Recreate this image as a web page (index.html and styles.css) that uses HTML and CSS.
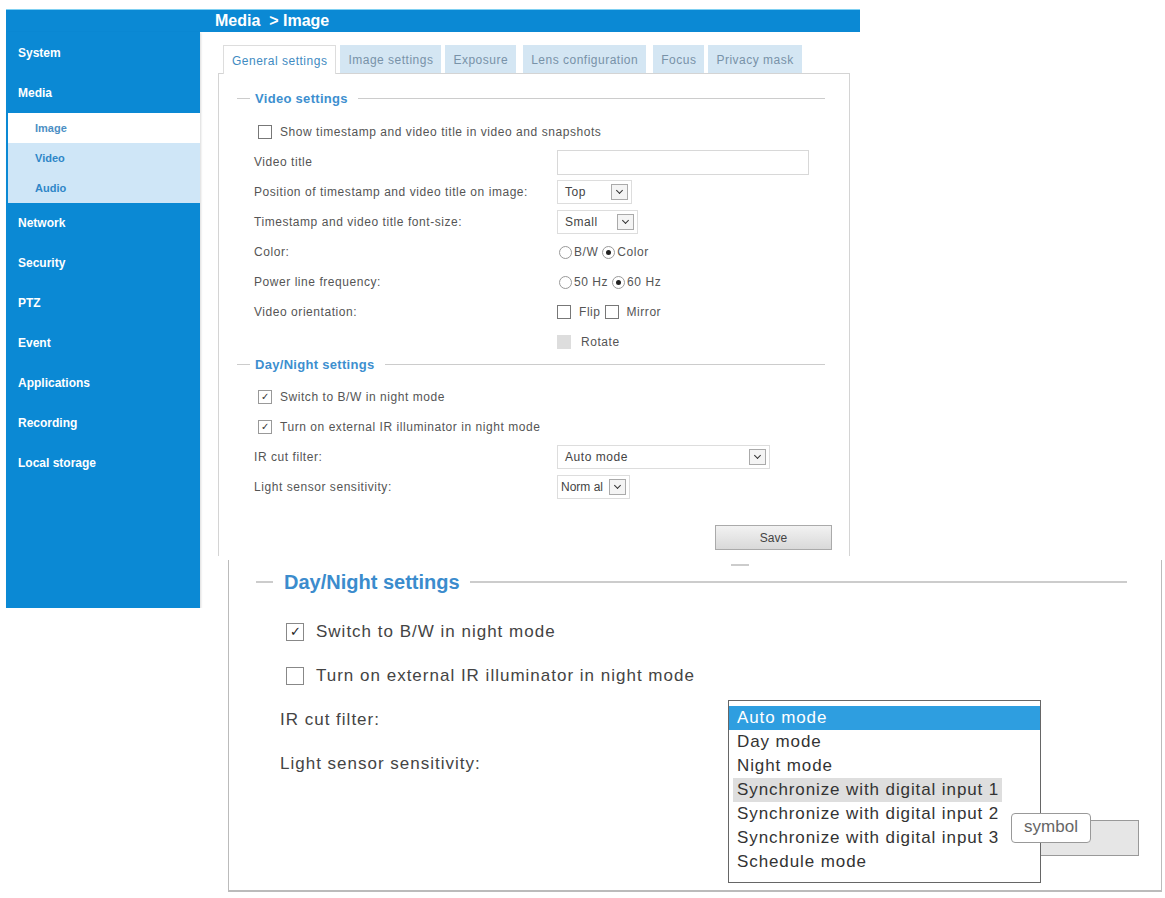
FILE: index.html
```html
<!DOCTYPE html>
<html lang="en">
<head>
    <meta charset="UTF-8">
    <meta name="viewport" content="width=device-width, initial-scale=1.0">
    <title>Media &gt; Image</title>
    <link rel="stylesheet" href="styles.css">
</head>
<body>
    <div class="console">
        <div class="topbar"><span class="crumb">Media &nbsp;&gt; Image</span></div>
        <div class="frame">
            <nav class="sidebar">
                <a class="nav_item">System</a>
                <a class="nav_item">Media</a>
                <div class="submenu">
                    <a class="sub_item current">Image</a>
                    <a class="sub_item">Video</a>
                    <a class="sub_item">Audio</a>
                </div>
                <a class="nav_item">Network</a>
                <a class="nav_item">Security</a>
                <a class="nav_item">PTZ</a>
                <a class="nav_item">Event</a>
                <a class="nav_item">Applications</a>
                <a class="nav_item">Recording</a>
                <a class="nav_item">Local storage</a>
            </nav>

            <div class="main">
                <ul class="tabs">
                    <li class="tab active">General settings</li>
                    <li class="tab">Image settings</li>
                    <li class="tab">Exposure</li>
                    <li class="tab tab_wide">Lens configuration</li>
                    <li class="tab tab_wide">Focus</li>
                    <li class="tab">Privacy mask</li>
                </ul>

                <div class="panel">
                    <div class="legend"><span class="dash"></span><span class="legend_title">Video settings</span><span class="rule"></span></div>

                    <div class="row check_row first">
                        <span class="box"></span>Show timestamp and video title in video and snapshots
                    </div>
                    <div class="row">
                        <span class="label">Video title</span>
                        <span class="textbox"></span>
                    </div>
                    <div class="row">
                        <span class="label">Position of timestamp and video title on image:</span>
                        <span class="select sel_top">Top<span class="arrow"></span></span>
                    </div>
                    <div class="row">
                        <span class="label">Timestamp and video title font-size:</span>
                        <span class="select sel_small">Small<span class="arrow"></span></span>
                    </div>
                    <div class="row">
                        <span class="label">Color:</span>
                        <span class="radio"></span>B/W <span class="radio on"></span>Color
                    </div>
                    <div class="row">
                        <span class="label">Power line frequency:</span>
                        <span class="radio"></span>50 Hz <span class="radio on"></span>60 Hz
                    </div>
                    <div class="row">
                        <span class="label">Video orientation:</span>
                        <span class="box"></span>Flip <span class="box gap"></span>Mirror
                    </div>
                    <div class="row">
                        <span class="label"></span>
                        <span class="box disabled"></span>Rotate
                    </div>

                    <div class="legend second"><span class="dash"></span><span class="legend_title">Day/Night settings</span><span class="rule"></span></div>

                    <div class="row check_row after_legend">
                        <span class="box checked">&#10003;</span>Switch to B/W in night mode
                    </div>
                    <div class="row check_row">
                        <span class="box checked">&#10003;</span>Turn on external IR illuminator in night mode
                    </div>
                    <div class="row">
                        <span class="label">IR cut filter:</span>
                        <span class="select sel_mode">Auto mode<span class="arrow"></span></span>
                    </div>
                    <div class="row">
                        <span class="label">Light sensor sensitivity:</span>
                        <span class="select sel_normal">Norm al<span class="arrow"></span></span>
                    </div>

                    <div class="actions"><button class="save">Save</button></div>
                </div>
            </div>
        </div>
    </div>

    <!-- enlarged view of the Day/Night block with the IR cut filter list open -->
    <div class="closeup">
        <span class="grip"></span>
        <div class="big_legend"><span class="dash"></span><span class="big_title">Day/Night settings</span><span class="rule"></span></div>

        <div class="big_row">
            <span class="big_box">&#10003;</span>Switch to B/W in night mode
        </div>
        <div class="big_row">
            <span class="big_box"></span>Turn on external IR illuminator in night mode
        </div>
        <div class="big_row label_row">IR cut filter:</div>
        <div class="big_row label_row">Light sensor sensitivity:</div>

        <span class="hidden_button"></span>
        <ul class="options">
            <li class="opt selected">Auto mode</li>
            <li class="opt">Day mode</li>
            <li class="opt">Night mode</li>
            <li class="opt hover">Synchronize with digital input 1</li>
            <li class="opt">Synchronize with digital input 2</li>
            <li class="opt">Synchronize with digital input 3</li>
            <li class="opt">Schedule mode</li>
        </ul>
        <span class="tooltip">symbol</span>
    </div>
</body>
</html>
```

FILE: styles.css
```css
body {
    font-family: "Liberation Sans", Arial, sans-serif;
    margin: 0;
    padding: 0;
    background: #fff;
    color: #555;
}

.console {
    width: 854px;
    margin: 10px 0 0 6px;
}
.topbar {
    height: 22px;
    background: #0b89d4;
    border-top: 1px solid #7fd0f2;
    margin-top: -1px;
}
.crumb {
    display: inline-block;
    margin-left: 209px;
    color: #fff;
    font-weight: bold;
    font-size: 16px;
    line-height: 22px;
}
.frame {
    display: flex;
}

/* left menu */
.sidebar {
    flex-shrink: 0;
    width: 194px;
    height: 576px;
    background: #0b89d4;
    display: flex;
    flex-direction: column;
    box-shadow: 1px 1px 2px rgba(0, 0, 0, 0.15);
}
.nav_item {
    display: block;
    height: 40px;
    line-height: 40px;
    padding-left: 12px;
    color: #fff;
    font-weight: bold;
    font-size: 12px;
}
.nav_item:first-child {
    margin-top: 1px;
}
.submenu {
    margin-left: 2px;
    background: #cfe6f7;
}
.sub_item {
    display: block;
    height: 30px;
    line-height: 30px;
    padding-left: 27px;
    color: #2f86c8;
    font-weight: bold;
    font-size: 11px;
}
.sub_item.current {
    background: #fff;
    color: #4c8fc4;
}

/* settings area */
.main {
    width: 642px;
    padding: 13px 0 0 18px;
}
.tabs {
    list-style: none;
    margin: 0 0 0 5px;
    padding: 0;
    display: flex;
    gap: 4px;
}
.tab {
    height: 28px;
    line-height: 30px;
    padding: 0 8px;
    background: #d4e6f3;
    color: #7892a8;
    font-size: 12px;
    letter-spacing: 0.5px;
}
.tab_wide {
    margin-left: 3px;
}
.tab.active {
    background: #fff;
    color: #3f8bc2;
    border: 1px solid #ddd;
    border-bottom: none;
    height: 28px;
    margin-bottom: -1px;
    position: relative;
}

.panel {
    width: 588px;
    height: 468px;
    border: 1px solid #d4d4d4;
    border-bottom: none;
    padding: 14px 24px 0 18px;
    font-size: 12px;
    letter-spacing: 0.55px;
}
.legend {
    display: flex;
    align-items: center;
    height: 20px;
}
.legend.second {
    margin-top: -3px;
}
.dash {
    width: 13px;
    border-top: 1px solid #ccc;
}
.legend_title {
    margin: 0 10px 0 5px;
    color: #3d8fcf;
    font-weight: bold;
    font-size: 13px;
    letter-spacing: 0.3px;
}
.rule {
    flex: 1;
    border-top: 1px solid #ccc;
}

.row {
    display: flex;
    align-items: center;
    height: 30px;
    padding-left: 17px;
    white-space: nowrap;
}
.row.first {
    margin-top: 9px;
}
.row.after_legend {
    margin-top: 8px;
}
.check_row {
    padding-left: 21px;
}
.label {
    width: 303px;
}
.box {
    display: inline-block;
    width: 12px;
    height: 12px;
    border: 1px solid #777;
    background: #fff;
    margin-right: 8px;
    font-size: 10px;
    line-height: 12px;
    text-align: center;
    color: #333;
    letter-spacing: 0;
}
.box.gap {
    margin-left: 4px;
}
.box.checked {
    border-color: #999;
}
.box.disabled {
    background: #ddd;
    border-color: #ddd;
    margin-right: 10px;
}
.textbox {
    width: 250px;
    height: 23px;
    border: 1px solid #d8d8d8;
}
.select {
    position: relative;
    height: 22px;
    line-height: 22px;
    border: 1px solid #ddd;
    padding-left: 7px;
    color: #444;
}
.sel_top {
    width: 66px;
}
.sel_small {
    width: 72px;
}
.sel_mode {
    width: 204px;
}
.sel_normal {
    width: 68px;
    padding-left: 3px;
    letter-spacing: 0;
}
.arrow {
    position: absolute;
    right: 3px;
    top: 3px;
    width: 15px;
    height: 14px;
    border: 1px solid #aaa;
    background: #f4f4f4;
}
.arrow::after {
    content: "";
    position: absolute;
    left: 5px;
    top: 3px;
    width: 4px;
    height: 4px;
    border-right: 1.5px solid #333;
    border-bottom: 1.5px solid #333;
    transform: rotate(45deg);
}
.radio {
    display: inline-block;
    width: 11px;
    height: 11px;
    border: 1px solid #999;
    border-radius: 50%;
    margin: 0 2px 0 2px;
    position: relative;
}
.radio.on {
    margin-left: 4px;
}
.radio.on::after {
    content: "";
    position: absolute;
    left: 3px;
    top: 3px;
    width: 5px;
    height: 5px;
    border-radius: 50%;
    background: #222;
}

.actions {
    display: flex;
    justify-content: flex-end;
    margin: 23px -7px 0 0;
}
.save {
    width: 117px;
    height: 25px;
    border: 1px solid #aaa;
    background: linear-gradient(#f2f2f2, #d9d9d9);
    font-family: "Liberation Sans", Arial, sans-serif;
    font-size: 12px;
    color: #444;
}

/* enlarged Day/Night block */
.closeup {
    position: absolute;
    left: 228px;
    top: 560px;
    width: 932px;
    height: 330px;
    background: #fff;
    border: 1px solid #bbb;
    border-top: none;
    border-bottom: 2px solid #bbb;
    padding: 0;
    color: #444;
}
.grip {
    position: absolute;
    left: 502px;
    top: 4px;
    width: 18px;
    height: 2px;
    background: #ccc;
}
.big_legend {
    display: flex;
    align-items: center;
    height: 26px;
    margin: 9px 34px 0 27px;
}
.big_legend .dash {
    width: 17px;
    border-top-width: 2px;
}
.big_title {
    margin: 0 10px 0 11px;
    color: #3b8ccd;
    font-weight: bold;
    font-size: 20px;
}
.big_legend .rule {
    border-top-width: 2px;
}
.big_row {
    display: flex;
    align-items: center;
    height: 44px;
    padding-left: 57px;
    font-size: 17px;
    letter-spacing: 1px;
    white-space: nowrap;
}
.big_legend + .big_row {
    margin-top: 15px;
}
.label_row {
    padding-left: 51px;
}
.big_box {
    width: 16px;
    height: 16px;
    border: 1px solid #888;
    margin-right: 12px;
    font-size: 13px;
    line-height: 16px;
    text-align: center;
    color: #222;
    letter-spacing: 0;
}

.hidden_button {
    position: absolute;
    left: 772px;
    top: 260px;
    width: 136px;
    height: 34px;
    border: 1px solid #999;
    background: #e6e6e6;
}
.options {
    position: absolute;
    left: 499px;
    top: 140px;
    width: 311px;
    margin: 0;
    padding: 5px 0 8px;
    list-style: none;
    background: #fff;
    border: 1px solid #666;
    font-size: 17px;
    letter-spacing: 0.9px;
}
.opt {
    height: 24px;
    line-height: 24px;
    padding-left: 8px;
    color: #333;
    white-space: nowrap;
}
.opt.selected {
    background: #2e9ee0;
    color: #fff;
}
.opt.hover {
    background: #dedede;
    margin: 0 38px 0 4px;
    padding-left: 4px;
}
.tooltip {
    position: absolute;
    left: 782px;
    top: 253px;
    width: 78px;
    height: 28px;
    line-height: 26px;
    border: 1px solid #999;
    border-radius: 4px;
    background: #fff;
    text-align: center;
    font-size: 17px;
    color: #666;
}
```
